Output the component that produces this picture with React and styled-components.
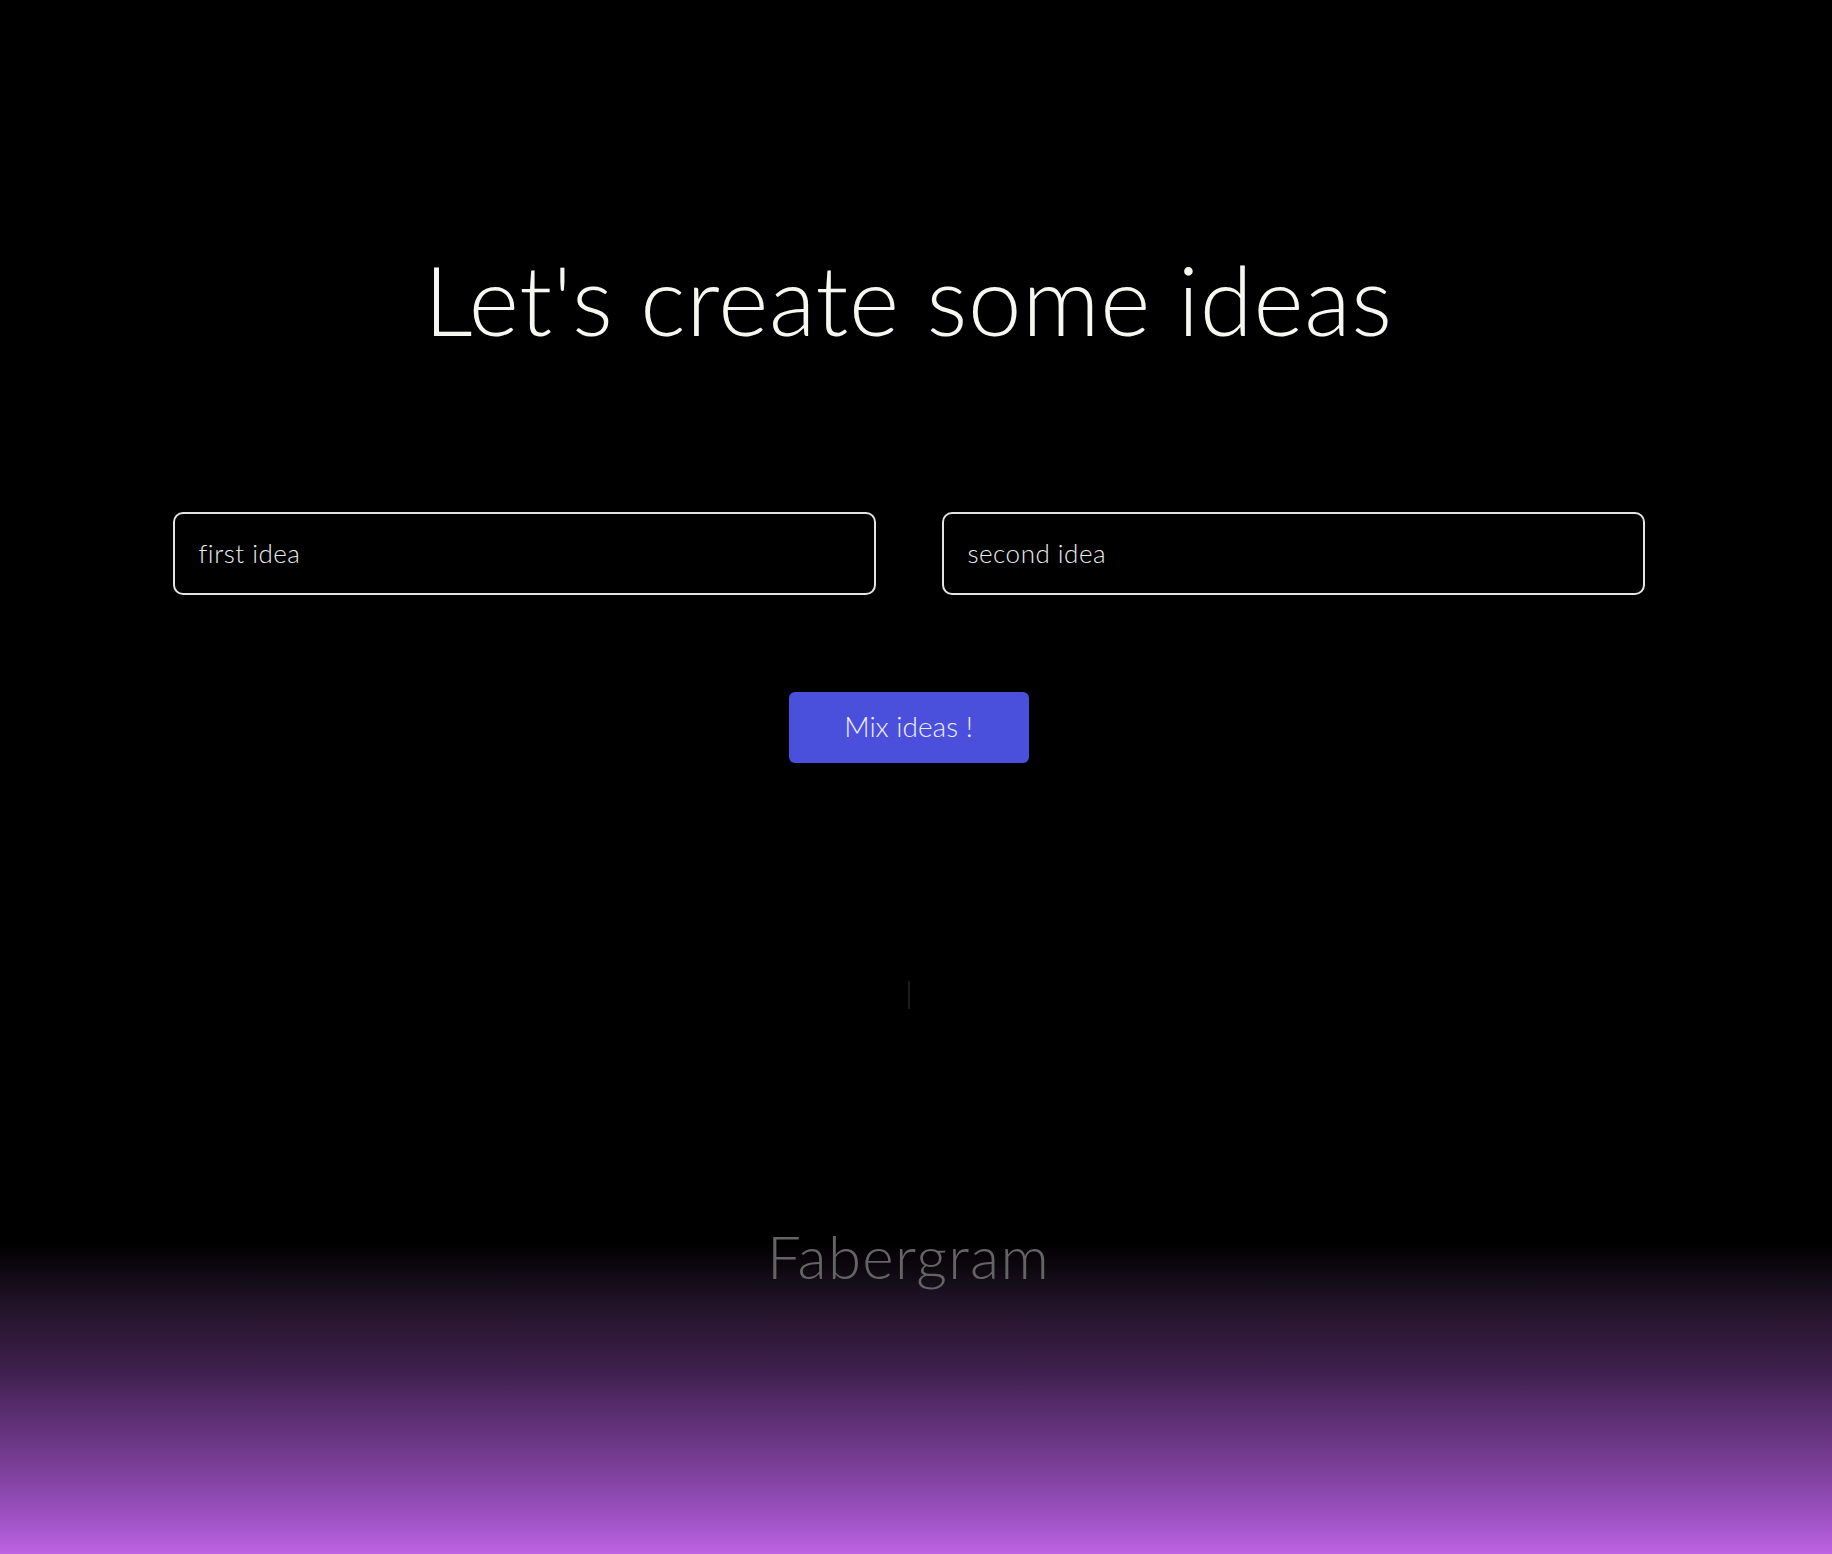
import React, { useState } from "react";
import styled, { createGlobalStyle } from "styled-components";

const GlobalStyle = createGlobalStyle`
  html, body {
    margin: 0;
    padding: 0;
    background: #000;
  }
  body {
    font-family: Lato, "Open Sans", sans-serif;
  }
`;

const StPage = styled.div`
  min-height: 1554px;
  background-color: #000;
  display: flex;
  flex-direction: column;
`;

const StMain = styled.main`
  display: flex;
  flex-direction: column;
  align-items: center;
  padding: 251px 15px 0 0;
`;

const StTitle = styled.h1`
  margin: 0;
  font-size: 96px;
  line-height: 96px;
  font-weight: 300;
  color: #f7f7f2;
  letter-spacing: 0.7px;
`;

const StInputRow = styled.div`
  margin-top: 165px;
  display: flex;
  gap: 66px;
`;

const StInput = styled.input`
  box-sizing: border-box;
  width: 703px;
  height: 83px;
  padding: 0 24px 2px;
  background: transparent;
  border: 2px solid #e4e4e4;
  border-radius: 10px;
  color: #f2f2f2;
  font-family: Lato, sans-serif;
  font-size: 26px;
  font-weight: 300;
  letter-spacing: 0.5px;
  outline: none;

  &::placeholder {
    color: #ececec;
    opacity: 1;
  }
`;

const StMixBtn = styled.button`
  margin-top: 97px;
  width: 240px;
  height: 71px;
  padding: 0 0 3px;
  border: none;
  border-radius: 6px;
  background-color: #4a4fdc;
  color: #eef;
  font-family: Lato, sans-serif;
  font-size: 28px;
  font-weight: 300;
  cursor: pointer;
  &:hover {
    opacity: 0.9;
  }
`;

const StResult = styled.div`
  margin-top: 218px;
  width: 2px;
  height: 28px;
  background-color: #1b1b1b;
`;

const StFooter = styled.footer`
  margin-top: auto;
  height: 354px;
  padding: 26px 15px 0 0;
  box-sizing: border-box;
  display: flex;
  justify-content: center;
  background: linear-gradient(
    to bottom,
    #000 0px,
    #000 43px,
    #1f1225 100px,
    #3d1f4b 167px,
    #5c2f73 217px,
    #7b3f97 267px,
    #9d52c3 317px,
    #bd63e3 354px
  );
`;

const StBrand = styled.div`
  font-size: 60px;
  line-height: 60px;
  font-weight: 300;
  letter-spacing: 1.3px;
  color: #646464;
`;

function App() {
  const [first, setFirst] = useState("");
  const [second, setSecond] = useState("");
  const [result, setResult] = useState("");

  return (
    <>
      <GlobalStyle />
      <StPage>
        <StMain>
          <StTitle>Let's create some ideas</StTitle>
          <StInputRow>
            <StInput placeholder="first idea" value={first} onChange={(e) => setFirst(e.target.value)} />
            <StInput placeholder="second idea" value={second} onChange={(e) => setSecond(e.target.value)} />
          </StInputRow>
          <StMixBtn onClick={() => setResult(first + " " + second)}>Mix ideas !</StMixBtn>
          <StResult title={result} />
        </StMain>
        <StFooter>
          <StBrand>Fabergram</StBrand>
        </StFooter>
      </StPage>
    </>
  );
}

export default App;
